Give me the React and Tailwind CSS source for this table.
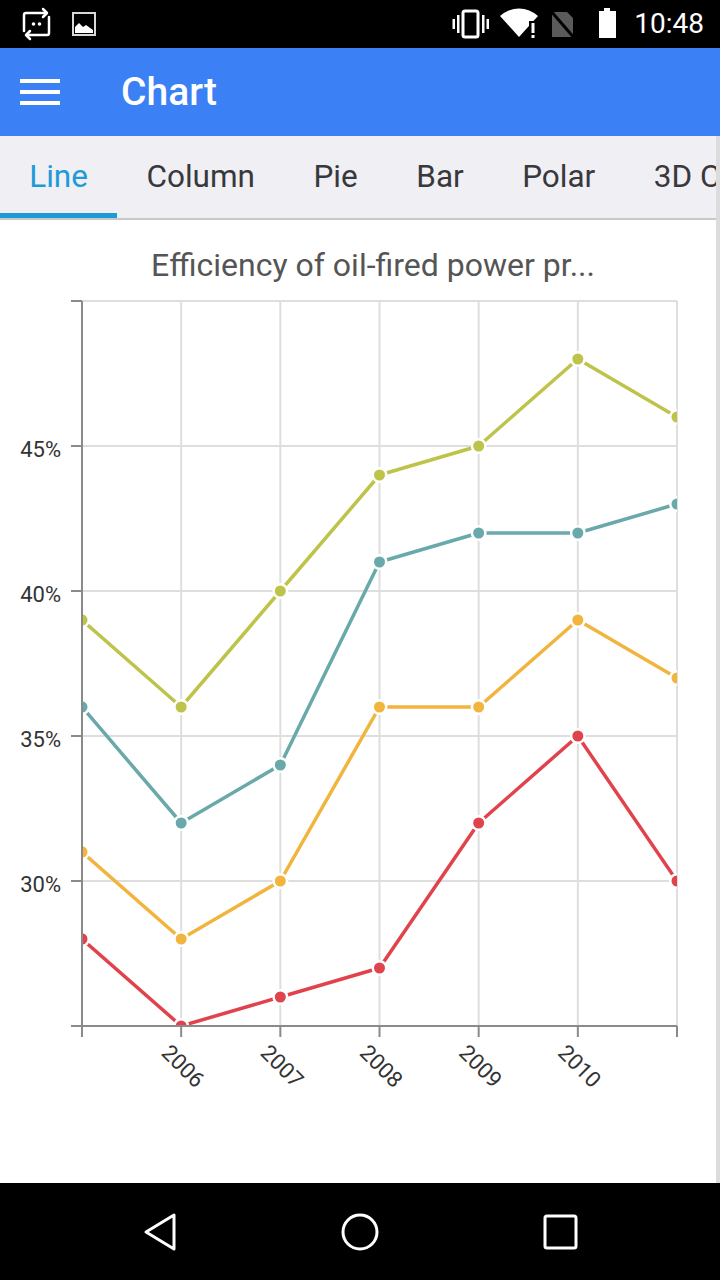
import React from 'react';

// Chart geometry in page pixels (the svg viewBox starts at the page y of the svg).
const LEFT = 82;
const RIGHT = 677;
const TOP = 301;
const BOTTOM = 1026;
const MIN_PCT = 25;
const PX_PER_PCT = 29;
const STEP_X = (RIGHT - LEFT) / 6;

const YEARS = [2005, 2006, 2007, 2008, 2009, 2010, 2011];

const SERIES = [
  { color: '#bec34a', data: [39, 36, 40, 44, 45, 48, 46] },
  { color: '#6aa9aa', data: [36, 32, 34, 41, 42, 42, 43] },
  { color: '#f1b43d', data: [31, 28, 30, 36, 36, 39, 37] },
  { color: '#e1434d', data: [28, 25, 26, 27, 32, 35, 30] },
];

const TABS = ['Line', 'Column', 'Pie', 'Bar', 'Polar', '3D Column'];

const xAt = (i) => LEFT + STEP_X * i;
const yAt = (v) => BOTTOM - (v - MIN_PCT) * PX_PER_PCT;

function StatusBar() {
  return (
    <div className="h-[48px] bg-black flex items-center justify-between shrink-0">
      <svg width="110" height="48" viewBox="0 0 110 48">
        <g fill="none" stroke="#fff" strokeWidth="2.5" strokeLinecap="round" strokeLinejoin="round">
          <path d="M24 31 V15 a2 2 0 0 1 2 -2 H45" />
          <path d="M43 9 L47 13 L43 17" />
          <path d="M49 17 V33 a2 2 0 0 1 -2 2 H28" />
          <path d="M30 31 L26 35 L30 39" />
        </g>
        <circle cx="33.5" cy="24" r="1.8" fill="#fff" />
        <circle cx="39.5" cy="24" r="1.8" fill="#fff" />
        <rect x="73" y="13" width="22" height="22" fill="none" stroke="#d8d8d8" strokeWidth="2" />
        <path d="M75 33 V27 L79 23 L83 27 L86 25 L93 30 V33 Z" fill="#fff" />
      </svg>
      <div className="flex items-center">
        <svg width="190" height="48" viewBox="440 0 190 48">
          <rect x="448.5" y="19" width="2.5" height="10" fill="#fff" />
          <rect x="453" y="15" width="2.5" height="18" fill="#fff" />
          <rect x="459" y="11" width="15" height="26" rx="2" fill="none" stroke="#fff" strokeWidth="3" />
          <rect x="478" y="15" width="2.5" height="18" fill="#fff" />
          <rect x="482.5" y="19" width="2.5" height="10" fill="#fff" />
          <path d="M515 37 L496 16 A28 28 0 0 1 534 16 Z" fill="#fff" />
          <rect x="525" y="21" width="12" height="20" fill="#000" />
          <rect x="527.5" y="23" width="3" height="10" fill="#fff" />
          <rect x="527.5" y="35" width="3" height="3" fill="#fff" />
          <path d="M548 12 H563 L569 18 V37 H548 Z" fill="#5a5a5a" />
          <line x1="546" y1="10" x2="572" y2="40" stroke="#000" strokeWidth="3" />
          <rect x="600" y="8" width="6" height="4" fill="#fff" />
          <rect x="595" y="11" width="17" height="27" fill="#fff" />
        </svg>
        <span className="text-white text-[28px] leading-none mr-[16px] font-['Roboto',sans-serif]">10:48</span>
      </div>
    </div>
  );
}

function AppBar() {
  return (
    <div className="h-[88px] bg-[#3b80f5] flex items-center shrink-0">
      <div className="w-[121px] pl-[20px] flex flex-col gap-[7px]">
        <span className="block w-[40px] h-[4px] bg-white" />
        <span className="block w-[40px] h-[4px] bg-white" />
        <span className="block w-[40px] h-[4px] bg-white" />
      </div>
      <span className="text-white text-[39px] font-medium leading-none">Chart</span>
    </div>
  );
}

function Tabs() {
  return (
    <div className="h-[84px] bg-[#efeff4] border-b-2 border-[#c8c8ca] flex overflow-hidden shrink-0">
      {TABS.map((t, i) => (
        <div
          key={t}
          className={`px-[29.25px] pt-[4px] border-b-[5px] flex items-center whitespace-nowrap text-[31.5px] ${
            i === 0 ? 'border-[#1e9bd7] text-[#1e9bd7]' : 'border-transparent text-[#38383c]'
          }`}
        >
          {t}
        </div>
      ))}
    </div>
  );
}

function LineChart() {
  const yTicks = [50, 45, 40, 35, 30, 25];
  return (
    <svg width="716" height="899" viewBox="0 284 716 899" className="block">
      <defs>
        <clipPath id="plot">
          <rect x={LEFT + 1} y={TOP - 20} width={RIGHT - LEFT - 1} height={BOTTOM - TOP + 20} />
        </clipPath>
      </defs>
      {/* grid */}
      <g stroke="#dedede" strokeWidth="2">
        {yTicks.slice(0, 5).map((v) => (
          <line key={v} x1={LEFT} x2={RIGHT} y1={yAt(v)} y2={yAt(v)} />
        ))}
        {YEARS.slice(1).map((yr, i) => (
          <line key={yr} x1={xAt(i + 1)} x2={xAt(i + 1)} y1={TOP} y2={BOTTOM} />
        ))}
      </g>
      {/* series */}
      <g clipPath="url(#plot)">
        {SERIES.map((s) => (
          <g key={s.color}>
            <polyline
              fill="none"
              stroke={s.color}
              strokeWidth="3.5"
              strokeLinejoin="round"
              points={s.data.map((v, i) => `${xAt(i)},${yAt(v)}`).join(' ')}
            />
            {s.data.map((v, i) => (
              <circle key={i} cx={xAt(i)} cy={yAt(v)} r="6.75" fill={s.color} stroke="#fff" strokeWidth="2.5" />
            ))}
          </g>
        ))}
      </g>
      {/* axes */}
      <g stroke="#8a8a8a" strokeWidth="2">
        <line x1={LEFT} x2={LEFT} y1={TOP} y2={BOTTOM} />
        <line x1={71} x2={RIGHT} y1={BOTTOM} y2={BOTTOM} />
        {yTicks.map((v) => (
          <line key={v} x1={71} x2={LEFT} y1={yAt(v)} y2={yAt(v)} />
        ))}
        {YEARS.map((yr, i) => (
          <line key={yr} x1={xAt(i)} x2={xAt(i)} y1={BOTTOM} y2={BOTTOM + 11} />
        ))}
      </g>
      <g fill="#333" fontSize="22" fontFamily="Roboto, sans-serif">
        {yTicks.slice(1, 5).map((v) => (
          <text key={v} x={61} y={yAt(v) + 11} textAnchor="end">
            {v}%
          </text>
        ))}
        {YEARS.slice(1, 6).map((yr, i) => {
          const x = xAt(i + 1) - 21;
          const y = BOTTOM + 28;
          return (
            <text key={yr} x={x} y={y} transform={`rotate(45 ${x} ${y})`}>
              {yr}
            </text>
          );
        })}
      </g>
    </svg>
  );
}

function NavBar() {
  return (
    <div className="h-[97px] bg-black flex items-center justify-center shrink-0">
      <svg width="720" height="97" viewBox="0 1183 720 97">
        <g fill="none" stroke="#fff" strokeWidth="3" strokeLinejoin="round">
          <path d="M146 1232 L174 1215 V1249 Z" />
          <circle cx="360" cy="1232" r="17" />
          <rect x="545" y="1216" width="31" height="32" rx="2" />
        </g>
      </svg>
    </div>
  );
}

export default function App() {
  return (
    <div className="w-[720px] h-[1280px] flex flex-col bg-white overflow-hidden font-['Roboto',sans-serif]">
      <StatusBar />
      <AppBar />
      <div className="flex flex-1 min-h-0">
        <div className="w-[716px] flex flex-col">
          <Tabs />
          <div className="flex-1 flex flex-col bg-white">
            <div className="pt-[26px] h-[64px] text-center text-[32px] leading-[38px] text-[#555] pl-[30px] whitespace-nowrap">
              Efficiency of oil-fired power pr...
            </div>
            <LineChart />
          </div>
        </div>
        <div className="w-[4px] bg-[#dcdcdc]" />
      </div>
      <NavBar />
    </div>
  );
}
